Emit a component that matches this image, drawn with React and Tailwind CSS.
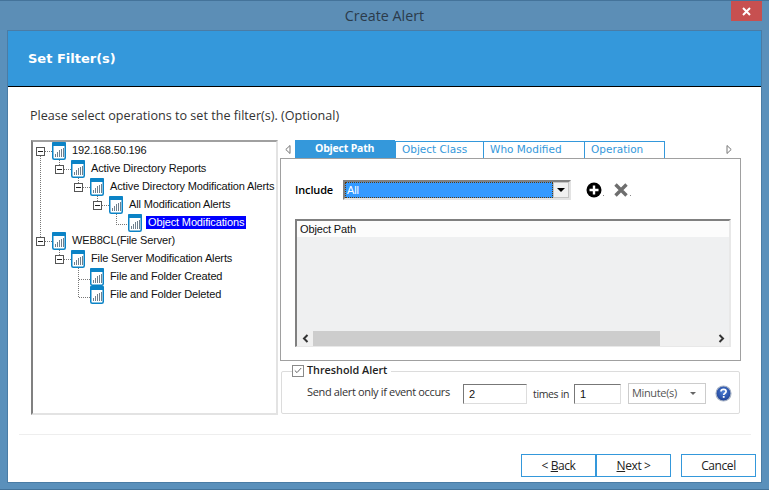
const ReportIcon = () => (
  <svg width="14" height="18" viewBox="0 0 14 18" className="shrink-0 relative">
    <rect x="0.75" y="0.75" width="12.5" height="16.5" rx="1.5" fill="#fff" stroke="#0b83c6" strokeWidth="1.5" />
    <rect x="0" y="0" width="14" height="4" rx="1" fill="#0b83c6" />
    <g fill="#6f7f8c">
      <rect x="3" y="12" width="1" height="3" />
      <rect x="5" y="10" width="1" height="5" />
      <rect x="7" y="8" width="1" height="7" />
      <rect x="9" y="7" width="1" height="8" />
      <rect x="11" y="6" width="1" height="9" />
    </g>
  </svg>
)

const TreeRow = ({ pad, box, label, selected }) => (
  <div className={`relative h-[18px] flex items-center ${pad}`}>
    {box ? (
      <div className="w-[9px] h-[9px] mt-[1px] border border-[#555] bg-white flex items-center justify-center shrink-0">
        <div className="w-[5px] h-[1px] bg-[#222]"></div>
      </div>
    ) : (
      <div className="w-[9px] shrink-0"></div>
    )}
    <div className="ml-[7px] flex shrink-0">
      <ReportIcon />
    </div>
    <span
      className={`ml-[4px] -mt-[1px] px-[2px] h-[13px] leading-[13px] whitespace-nowrap ${
        selected ? "bg-[#0000ff] text-white" : "text-[#111]"
      }`}
    >
      {label}
    </span>
  </div>
)

const TreeLines = () => (
  <svg width="245" height="180" className="absolute top-0 left-0" shapeRendering="crispEdges">
    <g transform="translate(-33,-142)" stroke="#777" strokeDasharray="1 1" fill="none">
      <path d="M40.5 156V237" />
      <path d="M45 151.5H52M45 241.5H52" />
      <path d="M59.5 160V165M59.5 250V255" />
      <path d="M64 169.5H71M64 259.5H71" />
      <path d="M78.5 178V183M78.5 268V297" />
      <path d="M83 187.5H90M78.5 279.5H90M78.5 297.5H90" />
      <path d="M97.5 196V201" />
      <path d="M102 205.5H109" />
      <path d="M116.5 214V224.5H128" />
    </g>
  </svg>
)

const Tab = ({ label, w }) => (
  <div className={`${w} h-[18px] mt-[1px] -ml-[1px] first:ml-0 pl-[6px] pt-[1px] border border-[#3498db] text-[#3498db] bg-white flex items-center font-['DejaVu_Sans'] text-[10.5px]`}>
    {label}
  </div>
)

const HelpIcon = () => (
  <svg width="17" height="17" viewBox="0 0 17 17">
    <defs>
      <radialGradient id="helpFill" cx="50%" cy="40%" r="60%">
        <stop offset="0%" stopColor="#4d7fd6" />
        <stop offset="100%" stopColor="#1d3f94" />
      </radialGradient>
    </defs>
    <circle cx="8.5" cy="8.5" r="7.5" fill="url(#helpFill)" stroke="#a9b4c4" strokeWidth="1.2" />
    <path d="M6 6.6C6 5.2 7.2 4.4 8.6 4.4 10 4.4 11.1 5.2 11.1 6.5 11.1 8.2 8.7 8.3 8.7 10" fill="none" stroke="#fff" strokeWidth="1.7" />
    <rect x="7.8" y="11" width="1.8" height="1.8" fill="#fff" />
  </svg>
)

const App = () => {
  return (
    <div className="w-[769px] h-[490px] flex flex-col bg-[#5a90bb] border-t border-b border-t-[#44739a] border-b-[#44739a] font-['Open_Sans',sans-serif] overflow-hidden">

      {/* Title bar */}

      <div className="relative h-[29px] shrink-0 bg-[#5c8eb6] flex items-center justify-center">
        <span className="text-[14.3px] text-[#2b3b4b]">Create Alert</span>
        <div className="absolute top-0 right-[7px] w-[31px] h-[20px] bg-[#c75050] flex items-center justify-center">
          <svg width="9" height="9" viewBox="0 0 9 9">
            <path d="M1 1L8 8M8 1L1 8" stroke="#fff" strokeWidth="2" />
          </svg>
        </div>
      </div>

      {/* Content */}

      <div className="mx-[7px] w-[755px] h-[453px] shrink-0 bg-white border border-[#4a7ca5] flex flex-col">

        <div className="h-[56px] shrink-0 bg-[#3498db] border-b border-black flex items-center pl-[20px]">
          <h1 className="font-['DejaVu_Sans'] font-bold text-[13px] text-white">Set Filter(s)</h1>
        </div>

        <div className="h-[53px] shrink-0 pl-[22px] pt-[20px] text-[12.6px] leading-[18px] text-[#333]">
          Please select operations to set the filter(s). (Optional)
        </div>

        <div className="flex pl-[23px] items-start font-['Liberation_Sans',sans-serif] text-[11px] tracking-[-0.14px]">

          {/* Tree */}

          <div className="relative w-[247px] h-[275px] shrink-0 border-2 border-t-[#a0a0a0] border-l-[#808080] border-r-[#e3e3e3] border-b-[#e3e3e3]">
            <TreeLines />
            <TreeRow pad="pl-[3px]" box label="192.168.50.196" />
            <TreeRow pad="pl-[22px]" box label="Active Directory Reports" />
            <TreeRow pad="pl-[41px]" box label="Active Directory Modification Alerts" />
            <TreeRow pad="pl-[60px]" box label="All Modification Alerts" />
            <TreeRow pad="pl-[79px]" label="Object Modifications" selected />
            <TreeRow pad="pl-[3px]" box label="WEB8CL(File Server)" />
            <TreeRow pad="pl-[22px]" box label="File Server Modification Alerts" />
            <TreeRow pad="pl-[41px]" label="File and Folder Created" />
            <TreeRow pad="pl-[41px]" label="File and Folder Deleted" />
          </div>

          {/* Right side */}

          <div className="ml-[2px] w-[461px] shrink-0 flex flex-col">

            <div className="h-[18px] flex items-center tracking-normal">
              <div className="w-[15px] shrink-0 flex justify-center">
                <svg width="6" height="9" viewBox="0 0 6 9"><path d="M5 .5V8.5L.8 4.5Z" fill="#fff" stroke="#777" /></svg>
              </div>
              <div className="w-[100px] h-[18px] pl-[20px] bg-[#3498db] text-white font-['Open_Sans'] font-bold text-[10.5px] tracking-[-0.2px] flex items-center shrink-0">
                Object Path
              </div>
              <div className="flex">
                <Tab label="Object Class" w="w-[89px]" />
                <Tab label="Who Modified" w="w-[102px]" />
                <Tab label="Operation" w="w-[81px]" />
              </div>
              <div className="flex-1 flex justify-end pr-[9px]">
                <svg width="6" height="9" viewBox="0 0 6 9"><path d="M1 .5V8.5L5.2 4.5Z" fill="#fff" stroke="#777" /></svg>
              </div>
            </div>

            <div className="h-[203px] border border-[#a0a0a0] pl-[14px]">

              <div className="flex items-center pt-[21px]">
                <span className="w-[48px] font-['Open_Sans'] font-semibold text-[11px] text-black">Include</span>
                <div className="w-[228px] h-[20px] flex border-2 border-t-[#808080] border-l-[#808080] border-r-[#e3e3e3] border-b-[#e3e3e3]">
                  <div className="flex-1 bg-[#3399ff] border border-dotted border-[#5a3a10] text-white pl-[1px] leading-[14px]">All</div>
                  <div className="w-[16px] bg-[#f0f0f0] border border-[#c4c4c4] flex items-center justify-center">
                    <div className="w-0 h-0 border-l-[4px] border-r-[4px] border-t-[4px] border-l-transparent border-r-transparent border-t-black"></div>
                  </div>
                </div>
                <svg width="16" height="16" viewBox="0 0 16 16" className="ml-[15px]">
                  <circle cx="8" cy="8" r="7.5" fill="#000" />
                  <path d="M8 3.5V12.5M3.5 8H12.5" stroke="#fff" strokeWidth="2.4" />
                </svg>
                <div className="ml-[1px] mt-[10px] w-[1px] h-[1px] bg-[#888]"></div>
                <svg width="14" height="14" viewBox="0 0 14 14" className="ml-[10px]">
                  <path d="M1.5 1.5L12.5 12.5M12.5 1.5L1.5 12.5" stroke="#6e6e6e" strokeWidth="3.4" />
                </svg>
                <div className="ml-[2px] mt-[10px] w-[1px] h-[1px] bg-[#888]"></div>
              </div>

              {/* List */}

              <div className="mt-[19px] w-[436px] h-[128px] flex flex-col border-t-2 border-l-2 border-r-2 border-b border-t-[#808080] border-l-[#808080] border-r-[#e8e8e8] border-b-[#e8e8e8]">
                <div className="h-[16px] bg-[#fcfcfc] pl-[3px] leading-[16px] text-[#111] shrink-0">Object Path</div>
                <div className="flex-1 bg-[#eff0f1]"></div>
                <div className="h-[15px] shrink-0 bg-[#f0f0f0] flex items-center">
                  <div className="w-[16px] flex justify-center">
                    <svg width="7" height="9" viewBox="0 0 7 9"><path d="M5.5 1L2 4.5L5.5 8" fill="none" stroke="#333" strokeWidth="2" /></svg>
                  </div>
                  <div className="w-[347px] h-[15px] bg-[#cdcdcd]"></div>
                  <div className="flex-1 flex justify-end pr-[4px]">
                    <svg width="7" height="9" viewBox="0 0 7 9"><path d="M1.5 1L5 4.5L1.5 8" fill="none" stroke="#333" strokeWidth="2" /></svg>
                  </div>
                </div>
              </div>

            </div>

            {/* Threshold */}

            <div className="relative mt-[10px] ml-[1px] w-[459px] h-[43px] border border-[#dcdcdc] rounded-[2px] pt-[12px] pl-[25px] flex items-start text-[#333] tracking-[-0.35px]">
              <div className="absolute -top-[8px] left-[10px] h-[13px] bg-white flex items-center pr-[4px] tracking-normal">
                <div className="w-[12px] h-[12px] border border-[#8a8a8a] flex items-center justify-center">
                  <svg width="8" height="7" viewBox="0 0 8 7"><path d="M.8 3.5L3 5.6L7.2 1" fill="none" stroke="#666" /></svg>
                </div>
                <span className="ml-[3px] font-['Open_Sans'] font-semibold text-[10.8px] text-[#222]">Threshold Alert</span>
              </div>
              <span className="w-[156px] h-[20px] leading-[16px] font-['Open_Sans'] text-[11px] whitespace-nowrap">Send alert only if event occurs</span>
              <div className="w-[64px] h-[20px] border border-t-[#777] border-l-[#777] border-r-[#ddd] border-b-[#ddd] pl-[5px] leading-[18px] text-[#111]">2</div>
              <span className="w-[47px] pl-[6px] leading-[20px] font-['Open_Sans'] text-[10.5px] whitespace-nowrap">times in</span>
              <div className="w-[47px] h-[20px] border border-t-[#777] border-l-[#777] border-r-[#ddd] border-b-[#ddd] pl-[5px] leading-[18px] text-[#111]">1</div>
              <div className="ml-[7px] -mt-[1px] w-[78px] h-[21px] border border-[#ccc] pl-[3px] pr-[9px] flex items-center justify-between font-['Open_Sans'] text-[11px] text-[#555]">
                <span>Minute(s)</span>
                <div className="w-0 h-0 border-l-[3px] border-r-[3px] border-t-[3px] border-l-transparent border-r-transparent border-t-[#666]"></div>
              </div>
              <div className="ml-[9px] mt-[1px] flex">
                <HelpIcon />
              </div>
            </div>

          </div>

        </div>

        <div className="mt-[19px] ml-[11px] w-[732px] h-[1px] bg-[#eeeeee] shrink-0"></div>

        {/* Buttons */}

        <div className="mt-[19px] pl-[513px] flex font-['Open_Sans'] text-[12px] tracking-[-0.4px] text-[#222]">
          <button className="w-[75px] h-[23px] border border-[#3498db] leading-none"><span>&lt; <u>B</u>ack</span></button>
          <button className="w-[75px] h-[23px] border border-[#3498db] leading-none"><span><u>N</u>ext &gt;</span></button>
          <button className="ml-[10px] w-[75px] h-[23px] border border-[#3498db] leading-none">Cancel</button>
        </div>

      </div>

    </div>
  );
};

export default App;
